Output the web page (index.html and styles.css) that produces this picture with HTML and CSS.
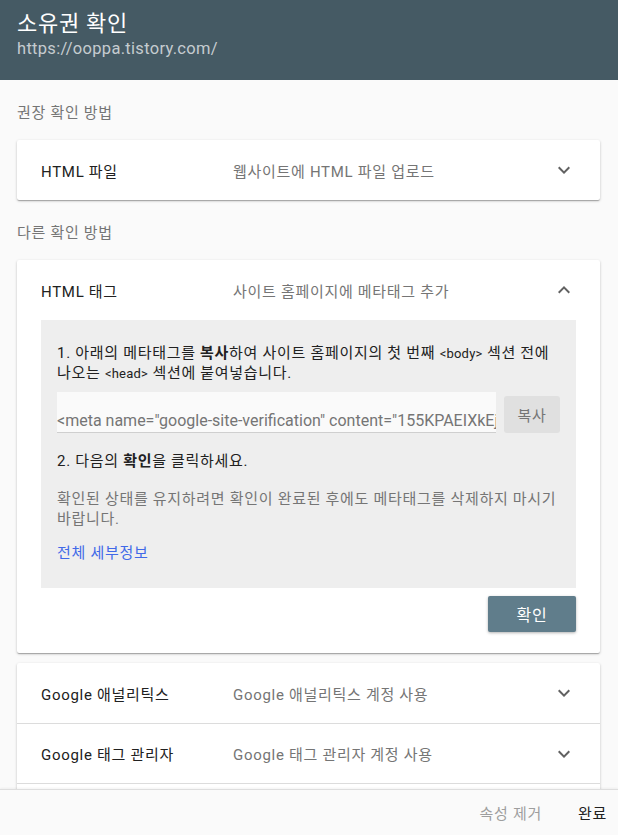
FILE: index.html
```html
<!DOCTYPE html>
<html lang="ko">
<head>
    <meta charset="UTF-8">
    <meta name="viewport" content="width=device-width, initial-scale=1.0">
    <title>소유권 확인</title>
    <link rel="stylesheet" href="styles.css">
</head>
<body>
    <div class="header">
        <h1>소유권 확인</h1>
        <p>https://ooppa.tistory.com/</p>
    </div>

    <div class="main">
        <div class="section-label">권장 확인 방법</div>

        <div class="card">
            <div class="row">
                <div class="row-title">HTML 파일</div>
                <div class="row-desc">웹사이트에 HTML 파일 업로드</div>
                <svg class="chevron" viewBox="0 0 24 24"><path d="M16.59 8.59L12 13.17 7.41 8.59 6 10l6 6 6-6z"></path></svg>
            </div>
        </div>

        <div class="section-label">다른 확인 방법</div>

        <div class="card">
            <div class="row">
                <div class="row-title">HTML 태그</div>
                <div class="row-desc">사이트 홈페이지에 메타태그 추가</div>
                <svg class="chevron" viewBox="0 0 24 24"><path d="M7.41 15.41L12 10.83l4.59 4.58L18 14l-6-6-6 6z"></path></svg>
            </div>
            <div class="panel">
                <p class="step">1. 아래의 메타태그를 <b>복사</b>하여 사이트 홈페이지의 첫 번째 <code>&lt;body&gt;</code> 섹션 전에 나오는 <code>&lt;head&gt;</code> 섹션에 붙여넣습니다.</p>
                <div class="copy-row">
                    <input class="meta-input" type="text" readonly value='<meta name="google-site-verification" content="155KPAEIXkEjwQ8s" />'>
                    <button class="copy-btn">복사</button>
                </div>
                <p class="step step-2">2. 다음의 <b>확인</b>을 클릭하세요.</p>
                <p class="note">확인된 상태를 유지하려면 확인이 완료된 후에도 메타태그를 삭제하지 마시기 바랍니다.</p>
                <a class="link" href="#">전체 세부정보</a>
            </div>
            <div class="actions">
                <button class="verify-btn">확인</button>
            </div>
        </div>

        <div class="card card-list">
            <div class="row">
                <div class="row-title">Google 애널리틱스</div>
                <div class="row-desc">Google 애널리틱스 계정 사용</div>
                <svg class="chevron" viewBox="0 0 24 24"><path d="M16.59 8.59L12 13.17 7.41 8.59 6 10l6 6 6-6z"></path></svg>
            </div>
            <div class="row">
                <div class="row-title">Google 태그 관리자</div>
                <div class="row-desc">Google 태그 관리자 계정 사용</div>
                <svg class="chevron" viewBox="0 0 24 24"><path d="M16.59 8.59L12 13.17 7.41 8.59 6 10l6 6 6-6z"></path></svg>
            </div>
            <div class="row">
                <div class="row-title">도메인 이름 공급업체</div>
                <div class="row-desc">DNS 레코드를 도메인과 연결</div>
                <svg class="chevron" viewBox="0 0 24 24"><path d="M16.59 8.59L12 13.17 7.41 8.59 6 10l6 6 6-6z"></path></svg>
            </div>
        </div>
    </div>

    <div class="footer">
        <button class="text-btn muted">속성 제거</button>
        <button class="text-btn">완료</button>
    </div>
</body>
</html>
```

FILE: styles.css
```css
* {
    margin: 0;
    padding: 0;
    box-sizing: border-box;
}

body {
    font-family: Roboto, "Noto Sans CJK KR", sans-serif;
    font-size: 15px;
    letter-spacing: 0.7px;
    background: #fafafa;
    color: #212121;
    height: 100vh;
    display: flex;
    flex-direction: column;
    overflow: hidden;
}

button,
input {
    font-family: inherit;
    letter-spacing: inherit;
}

.header {
    background: #455a64;
    height: 80px;
    padding: 10px 17px 0;
    flex-shrink: 0;
}

.header h1 {
    font-size: 22px;
    font-weight: 400;
    line-height: 28px;
    color: #fff;
}

.header p {
    font-size: 16.5px;
    letter-spacing: 0.3px;
    line-height: 22px;
    color: #c5ccd0;
}

.main {
    flex: 1;
    overflow: hidden;
    padding: 0 18px 0 17px;
}

.section-label {
    line-height: 20px;
    color: #757575;
    padding: 23px 0 17px;
}

.card {
    background: #fff;
    border-radius: 2px;
    box-shadow: 0 1px 3px rgba(0, 0, 0, 0.2), 0 1px 1px rgba(0, 0, 0, 0.14), 0 2px 1px -1px rgba(0, 0, 0, 0.12);
}

.card-list {
    margin-top: 10px;
}

.row {
    height: 60px;
    display: flex;
    align-items: center;
    padding: 0 24px;
}

.card-list .row + .row {
    border-top: 1px solid #dcdcdc;
}

.row-title {
    width: 192px;
    color: #212121;
}

.row-desc {
    flex: 1;
    color: #757575;
}

.chevron {
    width: 24px;
    height: 24px;
    fill: #616161;
}

.panel {
    background: #eeeeee;
    margin: 0 24px;
    padding: 23px 16px 25px;
    line-height: 20px;
}

.step {
    color: #212121;
}

.step b {
    font-weight: 700;
}

.step code {
    font-family: Roboto, sans-serif;
    font-size: 13px;
    line-height: 1;
    letter-spacing: 0.2px;
}

.copy-row {
    display: flex;
    align-items: center;
    gap: 8px;
    margin-top: 9px;
}

.meta-input {
    flex: 1;
    min-width: 0;
    height: 41px;
    padding: 16px 0 0;
    border: none;
    border-bottom: 1px solid #cfcfcf;
    background: #fafafa;
    font-size: 16px;
    letter-spacing: 0;
    color: #757575;
    outline: none;
}

.copy-btn {
    width: 56px;
    height: 37px;
    margin-top: 3px;
    border: none;
    border-radius: 3px;
    background: #e0e0e0;
    color: #757575;
    font-size: 15px;
}

.step-2 {
    margin-top: 18px;
}

.note {
    margin-top: 18px;
    color: #757575;
    word-break: break-all;
}

.link {
    display: inline-block;
    margin-top: 14px;
    color: #4169e8;
    text-decoration: none;
}

.actions {
    display: flex;
    justify-content: flex-end;
    padding: 8px 24px 21px;
}

.verify-btn {
    width: 88px;
    height: 36px;
    border: none;
    border-radius: 2px;
    background: #607d8b;
    color: #fff;
    font-size: 16px;
    box-shadow: 0 1px 3px rgba(0, 0, 0, 0.3);
}

.footer {
    height: 46px;
    flex-shrink: 0;
    display: flex;
    align-items: center;
    justify-content: flex-end;
    gap: 36px;
    padding-right: 11px;
    background: #fafafa;
    border-top: 1px solid #dedede;
    box-shadow: 0 -1px 2px rgba(0, 0, 0, 0.05);
    position: relative;
}

.text-btn {
    border: none;
    background: none;
    font-size: 15px;
    color: #212121;
}

.text-btn.muted {
    color: #9e9e9e;
}
```
